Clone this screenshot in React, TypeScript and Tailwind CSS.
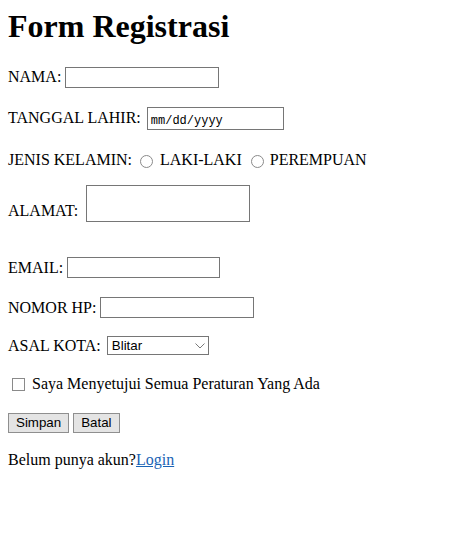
export default function App() {
  return (
    <div className="min-h-screen bg-white px-2 pt-2 font-['Liberation_Serif','Times_New_Roman',serif] text-[16px] leading-[18.4px] text-black">
      <h1 className="text-[32px] font-bold leading-[36.8px]">Form Registrasi</h1>

      <form className="flex flex-col" onSubmit={(e) => e.preventDefault()}>
        <div className="mt-[22px] flex items-center gap-1">
          <label>NAMA:</label>
          <input
            type="text"
            className="h-[21px] w-[154px] border border-[#767676] bg-white px-0.5 font-['Liberation_Sans',Arial,sans-serif] text-[13.33px] outline-none"
          />
        </div>

        <div className="mt-[19px] flex items-center gap-[6px]">
          <label>TANGGAL LAHIR:</label>
          <div className="flex h-[23px] w-[137px] items-center border border-[#767676] bg-white px-[3px] pt-[5px] font-['Liberation_Mono','Courier_New',monospace] text-[12px] leading-none">
            mm/dd/yyyy
          </div>
        </div>

        <div className="mt-[21px] flex items-start">
          <span>JENIS KELAMIN:</span>
          <input
            type="radio"
            name="jk"
            className="ml-2 mr-[7px] mt-[4px] h-[13px] w-[13px] appearance-none rounded-full border border-[#8a8a8a] bg-white"
          />
          <span>LAKI-LAKI</span>
          <input
            type="radio"
            name="jk"
            className="ml-[9px] mr-[6px] mt-[4px] h-[13px] w-[13px] appearance-none rounded-full border border-[#8a8a8a] bg-white"
          />
          <span>PEREMPUAN</span>
        </div>

        <div className="mt-[16px] flex items-end gap-2">
          <label className="mb-[2px]">ALAMAT:</label>
          <textarea className="h-[37px] w-[164px] resize-none border border-[#767676] bg-white outline-none" />
        </div>

        <div className="mt-[35px] flex items-center gap-1">
          <label>EMAIL:</label>
          <input
            type="email"
            className="h-[21px] w-[153px] border border-[#767676] bg-white px-0.5 font-['Liberation_Sans',Arial,sans-serif] text-[13.33px] outline-none"
          />
        </div>

        <div className="mt-[19px] flex items-center gap-1">
          <label>NOMOR HP:</label>
          <input
            type="text"
            className="h-[21px] w-[154px] border border-[#767676] bg-white px-0.5 font-['Liberation_Sans',Arial,sans-serif] text-[13.33px] outline-none"
          />
        </div>

        <div className="mt-[18px] flex items-center gap-[6px]">
          <label>ASAL KOTA:</label>
          <div className="relative h-[19px] w-[102px]">
            <select className="h-full w-full appearance-none rounded-none border border-[#767676] bg-white pl-1 font-['Liberation_Sans',Arial,sans-serif] text-[13.33px] leading-none text-black outline-none">
              <option>Blitar</option>
              <option>Malang</option>
              <option>Kediri</option>
            </select>
            <svg
              className="pointer-events-none absolute right-[4px] top-[7px]"
              width="10"
              height="6"
              viewBox="0 0 10 6"
              fill="none"
            >
              <path d="M0.5 0.5L5 5L9.5 0.5" stroke="#7a7a7a" strokeWidth="1" />
            </svg>
          </div>
        </div>

        <div className="mt-[20px] flex items-center">
          <input
            type="checkbox"
            className="ml-1 mr-[7px] h-[13px] w-[13px] appearance-none rounded-none border border-[#8a8a8a] bg-white"
          />
          <span>Saya Menyetujui Semua Peraturan Yang Ada</span>
        </div>

        <div className="mt-[19px] flex items-center gap-1">
          <button
            type="submit"
            className="h-[20px] border border-[#8f8f8f] bg-[#e4e4e4] px-[7px] font-['Liberation_Sans',Arial,sans-serif] text-[13.33px] leading-none"
          >
            Simpan
          </button>
          <button
            type="reset"
            className="h-[20px] border border-[#8f8f8f] bg-[#e4e4e4] px-[7px] font-['Liberation_Sans',Arial,sans-serif] text-[13.33px] leading-none"
          >
            Batal
          </button>
        </div>

        <p className="mt-[18px]">
          Belum punya akun?
          <a href="#" className="text-[#1a63b5] underline">
            Login
          </a>
        </p>
      </form>
    </div>
  );
}
